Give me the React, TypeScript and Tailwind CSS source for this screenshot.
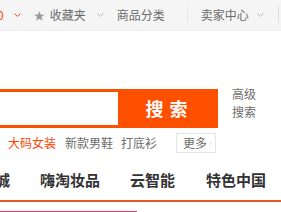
import React from 'react';

const font = { fontFamily: '"Microsoft YaHei", "Noto Sans CJK SC", sans-serif' };

const Caret = () => (
  <svg width="7" height="4" viewBox="0 0 7 4" className="block">
    <path d="M0.5 0.5 L3.5 3.5 L6.5 0.5" fill="none" stroke="currentColor" strokeWidth="1" />
  </svg>
);

export default function App() {
  return (
    <div className="w-[281px] h-[212px] overflow-hidden bg-white relative" style={font}>
      {/* top bar */}
      <div className="h-[31px] bg-[#f5f5f5] border-b border-[#eeeeee] flex items-center text-[12px] text-[#6c6c6c] whitespace-nowrap">
        <span className="text-[#f40] -ml-[3px] leading-none">0</span>
        <span className="ml-[10px] text-[#f40]"><Caret /></span>
        <span className="ml-[13px] text-[#999] text-[11px] leading-none">★</span>
        <span className="ml-[5px]">收藏夹</span>
        <span className="ml-[11px] text-[#bbb]"><Caret /></span>
        <span className="ml-[13px]">商品分类</span>
        <span className="ml-[22px] w-px h-[16px] bg-[#e5e5e5]" />
        <span className="ml-[13px]">卖家中心</span>
        <span className="ml-[8px] text-[#bbb]"><Caret /></span>
        <span className="ml-[14px] w-px h-[16px] bg-[#ddd]" />
      </div>

      {/* search */}
      <div className="flex mt-[58px] items-start">
        <div className="flex h-[39px] w-[218px] border-[3px] border-[#ff5000] bg-[#ff5000]">
          <div className="w-[118px] bg-white h-full -ml-[3px]" />
          <button className="flex-1 text-white text-[18px] font-bold tracking-[6px] flex items-center justify-center pl-[6px]">
            搜索
          </button>
        </div>
        <div className="ml-[14px] -mt-[4px] text-[12px] leading-[18px] text-[#6c6c6c]">
          <div>高级</div>
          <div>搜索</div>
        </div>
      </div>

      {/* hot words */}
      <div className="flex items-center mt-[5px] text-[12px] text-[#6c6c6c] whitespace-nowrap">
        <span className="ml-[8px] text-[#f40]">大码女装</span>
        <span className="ml-[9px]">新款男鞋</span>
        <span className="ml-[8px]">打底衫</span>
        <span className="ml-[19px] border border-[#e5e5e5] pl-[6px] pr-[4px] h-[20px] flex items-center">
          更多<span className="text-[#ccc] text-[8px] ml-[2px]">›</span>
        </span>
      </div>

      {/* nav */}
      <div className="mt-[11px] border-b-2 border-[#e4572a] h-[38px] pt-[5px] flex items-start text-[15px] font-bold text-[#333] whitespace-nowrap">
        <span className="-ml-[5px]">城</span>
        <span className="ml-[30px]">嗨淘妆品</span>
        <span className="ml-[30px]">云智能</span>
        <span className="ml-[31px]">特色中国</span>
      </div>

      {/* below */}
      <div className="flex mt-[9px]">
        <div className="w-[137px] h-[3px] bg-[#e2386b]" />
        <div className="ml-[11px] flex-1 h-px bg-[#eee] mt-[1px]" />
      </div>
    </div>
  );
}
